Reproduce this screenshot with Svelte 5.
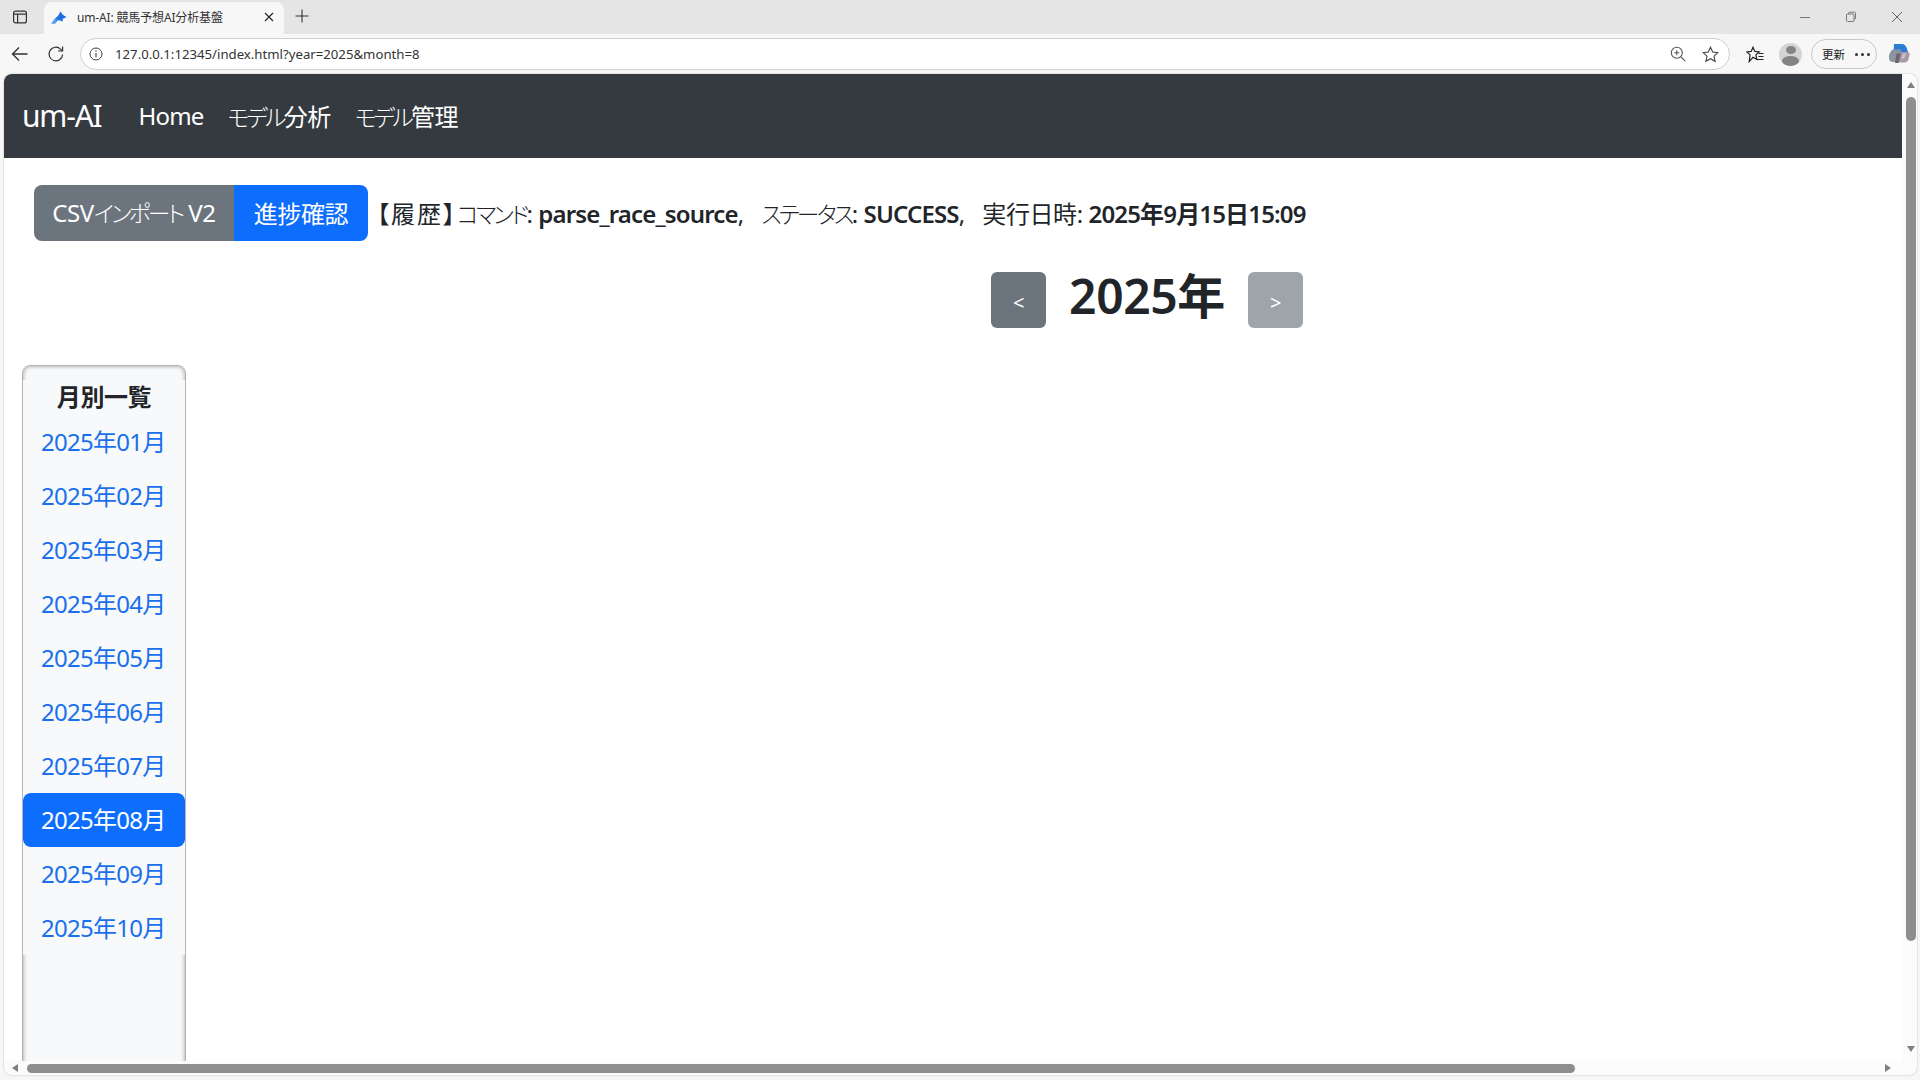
<script>
	const months = ['01', '02', '03', '04', '05', '06', '07', '08', '09', '10'];
	let current = '08';
</script>

<div class="window">
	<div class="tabstrip">
		<button class="chrome-btn side-toggle" aria-label="tabs">
			<svg width="16" height="16" viewBox="0 0 16 16" fill="none" stroke="#333" stroke-width="1.2">
				<rect x="1.6" y="2.1" width="12.8" height="11.8" rx="2" />
				<path d="M1.6 5.2h12.8M5.6 5.2v8.7" />
			</svg>
		</button>
		<div class="tab">
			<svg class="favicon" width="16" height="13" viewBox="0 0 16 13">
				<path d="M0.500 12.500 4 7.500 7 5 9.500 0.500 12 4 15.500 6 11.500 8 12 10.500 7 9 4 12.500Z" fill="#1a6fe8" />
				<path d="M0.500 12.500 4 7.500 6 8 4 12.500Z" fill="#5aa5f5" />
			</svg>
			<span class="tab-title">um-AI: 競馬予想AI分析基盤</span>
			<svg class="tab-close" width="10" height="10" viewBox="0 0 10 10" stroke="#222" stroke-width="1.1">
				<path d="M1 1l8 8M9 1l-8 8" />
			</svg>
		</div>
		<svg class="new-tab" width="14" height="14" viewBox="0 0 14 14" stroke="#333" stroke-width="1.1">
			<path d="M7 0.5v13M0.5 7h13" />
		</svg>
		<div class="window-controls">
			<svg width="12" height="12" viewBox="0 0 12 12" stroke="#777" fill="none"><path d="M1 6.5h10" /></svg>
			<svg width="12" height="12" viewBox="0 0 12 12" stroke="#777" fill="none">
				<rect x="1.5" y="3" width="7.5" height="7.5" rx="1" />
				<path d="M3.5 3V2.2q0-1 1-1h5q1 0 1 1v5q0 1-1 1H9" />
			</svg>
			<svg width="12" height="12" viewBox="0 0 12 12" stroke="#666" fill="none"><path d="M1 1l10 10M11 1L1 11" /></svg>
		</div>
	</div>

	<div class="toolbar">
		<svg class="back" width="18" height="16" viewBox="0 0 18 16" fill="none" stroke="#333" stroke-width="1.3">
			<path d="M16.5 8H1.5M8 1.5 1.5 8 8 14.5" />
		</svg>
		<svg class="reload" width="18" height="18" viewBox="0 0 18 18" fill="none" stroke="#333" stroke-width="1.2">
			<path d="M15.6 9.5a6.8 6.8 0 1 1-1.9-5.2L15.5 6" />
			<path d="M15.6 1.4V6H11" />
		</svg>
		<div class="address">
			<svg width="14" height="14" viewBox="0 0 14 14" fill="none" stroke="#444">
				<circle cx="7" cy="7" r="6" />
				<path d="M7 6v4.2M7 3.4v1.3" stroke-width="1.2" />
			</svg>
			<span class="url">127.0.0.1:12345/index.html?year=2025&amp;month=8</span>
			<svg class="zoom-icon" width="16" height="16" viewBox="0 0 16 16" fill="none" stroke="#555" stroke-width="1.1">
				<circle cx="6.8" cy="6.8" r="5.5" />
				<path d="M11 11l4.2 4.2M6.8 4.3v5M4.3 6.8h5" />
			</svg>
			<svg class="star" width="17" height="17" viewBox="0 0 17 17" fill="none" stroke="#444" stroke-width="1.1">
				<path d="M8.5 1.2 10.7 6l5.2.6-3.9 3.5 1.1 5.2-4.6-2.6-4.6 2.6L5 10.1 1.1 6.6 6.3 6Z" />
			</svg>
		</div>
		<svg class="fav-list" width="18" height="17" viewBox="0 0 18 17" fill="none" stroke="#222" stroke-width="1.2">
			<path d="M7 1.2 8.8 5.4l4.4.5-3.3 3 .9 4.5L7 11.3 3.2 15.6l.9-6.7L.8 5.9l4.4-.5Z" />
			<path d="M12.5 7.5h5M12.5 10.5h5M10.5 13.5h7" />
		</svg>
		<div class="avatar">
			<span class="avatar-head"></span>
			<span class="avatar-body"></span>
		</div>
		<div class="update-pill">
			<span>更新</span>
			<span class="dots"><i></i><i></i><i></i></span>
		</div>
		<svg class="copilot" width="22" height="22" viewBox="0 0 22 22">
			<path d="M6 1h8q3 0 4.500 3.500L20 9H5.500Z" fill="#2b7cd3" />
			<path d="M1 12 3 8q.7-1.500 2.500-1.500H13L10 19H5q-3.500 0-4-3.500Z" fill="#8c95a3" />
			<path d="M10 19.500 12 9h7.500q2.500 0 2 3l-.8 3.500q-.9 4-4.200 4Z" fill="#a89aa6" />
			<path d="M8.500 10.500H13L10.500 20H7Z" fill="#6f6470" />
			<path d="M15 10.500h3l-2 5h-2.500Z" fill="#c9c3cc" />
		</svg>
	</div>

	<div class="viewport">
		<div class="scroll-area">
			<main class="page">
				<nav class="navbar">
					<span class="brand">um-AI</span>
					<a class="nav-link home" href="#home">Home</a>
					<a class="nav-link" href="#analysis"><span class="kana">モデル</span>分析</a>
					<a class="nav-link" href="#manage"><span class="kana">モデル</span>管理</a>
				</nav>

				<div class="status-row">
					<div class="btn-group">
						<button class="btn secondary">CSV<span class="kana">インポート</span> V2</button>
						<button class="btn primary">進捗確認</button>
					</div>
					<span class="history">
						<span class="label">【履歴】</span><span class="kana">コマンド</span>: <b>parse_race_source</b>,&nbsp;&nbsp;
						<span class="kana">ステータス</span>: <b>SUCCESS</b>,&nbsp;&nbsp; 実行日時: <b>2025年9月15日15:09</b>
					</span>
				</div>

				<div class="year-nav">
					<button class="btn secondary year-btn">&lt;</button>
					<h2 class="year">2025年</h2>
					<button class="btn secondary year-btn faded">&gt;</button>
				</div>

				<aside class="sidebar">
					<h5 class="sidebar-title">月別一覧</h5>
					<ul class="months">
						{#each months as m}
							<li class:active={m === current}>2025年{m}月</li>
						{/each}
					</ul>
				</aside>
			</main>
			<div class="vscroll">
				<span class="arrow up"></span>
				<span class="vthumb"></span>
				<span class="arrow down"></span>
			</div>
		</div>
		<div class="hscroll">
			<span class="arrow left"></span>
			<span class="hthumb"></span>
			<span class="arrow right"></span>
		</div>
	</div>
</div>

<style>
	:global(body) {
		margin: 0;
		overflow: hidden;
		background: #f7f7f7;
	}

	.window {
		width: 1920px;
		height: 1080px;
		display: flex;
		flex-direction: column;
		overflow: hidden;
		font-family: 'Noto Sans', 'Noto Sans CJK JP', sans-serif;
		font-feature-settings: 'palt';
		letter-spacing: -0.025em;
		color: #212529;
	}

	/* narrow katakana, the CJK face is wider than the one in the screenshot */
	.kana {
		font-size: 0.95em;
		font-weight: 300;
		letter-spacing: -0.12em;
	}

	/* Browser chrome */
	.tabstrip {
		height: 34px;
		flex: none;
		display: flex;
		align-items: center;
		background: #e5e5e5;
	}

	.chrome-btn {
		border: none;
		background: none;
		padding: 0;
		display: flex;
	}

	.side-toggle {
		margin-left: 12px;
		margin-right: 16px;
	}

	.tab {
		width: 240px;
		height: 32px;
		margin-top: 2px;
		box-sizing: border-box;
		display: flex;
		align-items: center;
		background: #f7f7f7;
		border-radius: 8px 8px 0 0;
		padding: 0 10px 2px 7px;
		font-size: 12px;
		letter-spacing: -0.15px;
		color: #333;
	}

	.tab-title {
		margin-left: 10px;
		flex: 1;
		white-space: nowrap;
	}

	.new-tab {
		margin-left: 11px;
		margin-top: -2px;
	}

	.window-controls {
		margin-left: auto;
		margin-right: 17px;
		display: flex;
		gap: 34px;
	}

	.toolbar {
		height: 40px;
		flex: none;
		display: flex;
		align-items: center;
		background: #f7f7f7;
		padding-left: 11px;
		box-sizing: border-box;
	}

	.reload {
		margin-left: 18px;
	}

	.address {
		margin-left: 15px;
		width: 1650px;
		height: 32px;
		box-sizing: border-box;
		display: flex;
		align-items: center;
		background: #fff;
		border: 1px solid #cfcfcf;
		border-radius: 16px;
		padding-left: 8px;
	}

	.url {
		margin-left: 12px;
		font-size: 13.2px;
		letter-spacing: 0;
		color: #333;
		font-family: 'Noto Sans', sans-serif;
		flex: 1;
	}

	.star {
		margin-left: 16px;
		margin-right: 10px;
	}

	.fav-list {
		margin-left: 16px;
	}

	.avatar {
		margin-left: 15px;
		width: 23px;
		height: 23px;
		border-radius: 50%;
		background: #d4d4d4;
		overflow: hidden;
		display: flex;
		flex-direction: column;
		align-items: center;
	}

	.avatar-head {
		width: 10px;
		height: 10px;
		margin-top: 3px;
		border-radius: 50%;
		background: #838383;
	}

	.avatar-body {
		width: 17px;
		height: 12px;
		margin-top: 2px;
		border-radius: 50%;
		background: #838383;
	}

	.update-pill {
		margin-left: 9px;
		width: 66px;
		height: 30px;
		box-sizing: border-box;
		border: 1px solid #c8c8c8;
		border-radius: 15px;
		display: flex;
		align-items: center;
		padding-left: 10px;
		font-size: 11.5px;
		letter-spacing: 0;
		color: #222;
	}

	.dots {
		display: flex;
		gap: 3px;
		margin-left: 10px;
	}

	.dots i {
		width: 3px;
		height: 3px;
		border-radius: 50%;
		background: #333;
	}

	.copilot {
		margin-left: 11px;
	}

	/* Page viewport */
	.viewport {
		flex: 1;
		min-height: 0;
		margin: 0 3px 5px 4px;
		display: flex;
		flex-direction: column;
		background: #fbfbfb;
		border-radius: 8px;
		box-shadow: 0 0 2px rgba(0, 0, 0, 0.25);
		overflow: hidden;
	}

	.scroll-area {
		height: 987px;
		flex: none;
		display: flex;
	}

	.page {
		width: 1898px;
		flex: none;
		background: #fff;
		overflow: hidden;
	}

	.navbar {
		width: 1898px;
		height: 84px;
		box-sizing: border-box;
		display: flex;
		align-items: center;
		background: #343a40;
		padding: 0 0 2px 18px;
		color: #fff;
	}

	.brand {
		font-size: 30px;
		letter-spacing: -0.04em;
		margin-right: 37px;
	}

	.nav-link {
		font-size: 24px;
		color: #fff;
		text-decoration: none;
		margin-right: 24px;
	}

	.home {
		letter-spacing: -0.035em;
	}

	.status-row {
		display: flex;
		align-items: center;
		padding: 27px 0 0 30px;
		white-space: nowrap;
		font-size: 24px;
	}

	.btn-group {
		display: flex;
	}

	.btn {
		font: inherit;
		letter-spacing: inherit;
		color: #fff;
		height: 56px;
		border: none;
		padding: 0 0 2px;
	}

	.secondary {
		background: #6c757d;
	}

	.primary {
		background: #0d6efd;
	}

	.btn-group .secondary {
		width: 200px;
		border-radius: 8px 0 0 8px;
	}

	.btn-group .primary {
		width: 134px;
		border-radius: 0 8px 8px 0;
	}

	.history {
		margin: 0 0 2px 9px;
	}

	.label {
		letter-spacing: 2px;
	}

	.history b {
		font-weight: 600;
		letter-spacing: -0.035em;
	}

	.year-nav {
		width: 2286px;
		margin-top: 31px;
		display: flex;
		justify-content: center;
		align-items: center;
		gap: 23px;
	}

	.year-btn {
		width: 55px;
		padding: 4px 0 0;
		border-radius: 6px;
		font-size: 20px;
	}

	.faded {
		opacity: 0.65;
	}

	.year {
		margin: -8px 0 0;
		font-size: 48px;
		font-weight: 600;
		line-height: 56px;
	}

	.sidebar {
		width: 164px;
		height: 730px;
		box-sizing: border-box;
		margin: 37px 0 0 18px;
		background: #f8f9fa;
		border: 1px solid #b4b4b4;
		border-radius: 8px 8px 0 0;
		box-shadow: inset 0 0 4px rgba(0, 0, 0, 0.4);
	}

	/* the title block covers the inset shadow, it only shows above and below the list */
	.sidebar-title {
		margin: 14px 0 0;
		height: 35px;
		font-size: 24px;
		font-weight: 600;
		line-height: 34px;
		text-align: center;
		background: #f8f9fa;
	}

	.months {
		list-style: none;
		margin: 0;
		padding: 0;
		background: #f8f9fa;
	}

	.months li {
		height: 54px;
		line-height: 54px;
		padding-left: 18px;
		font-size: 24px;
		letter-spacing: -0.03em;
		color: #1a70ec;
		border-radius: 8px;
	}

	.months li.active {
		background: #0d6efd;
		color: #fff;
	}

	/* Scrollbars */
	.vscroll {
		width: 17px;
		flex: none;
		background: #fbfbfb;
		display: flex;
		flex-direction: column;
		align-items: center;
		padding-top: 8px;
		box-sizing: border-box;
	}

	.vthumb {
		width: 10px;
		height: 844px;
		margin: 9px 0 105px;
		border-radius: 5px;
		background: #8e8e8e;
	}

	.hscroll {
		height: 14px;
		display: flex;
		align-items: center;
		padding-left: 8px;
	}

	.hthumb {
		width: 1548px;
		height: 9px;
		margin-left: 9px;
		margin-right: 310px;
		border-radius: 5px;
		background: #8e8e8e;
	}

	.arrow {
		width: 0;
		height: 0;
		border-style: solid;
		border-color: transparent;
	}

	.up {
		border-width: 0 4.5px 6px;
		border-bottom-color: #808080;
	}

	.down {
		border-width: 6px 4.5px 0;
		border-top-color: #808080;
	}

	.left {
		border-width: 4.5px 6px 4.5px 0;
		border-right-color: #808080;
	}

	.right {
		border-width: 4.5px 0 4.5px 6px;
		border-left-color: #808080;
	}
</style>
